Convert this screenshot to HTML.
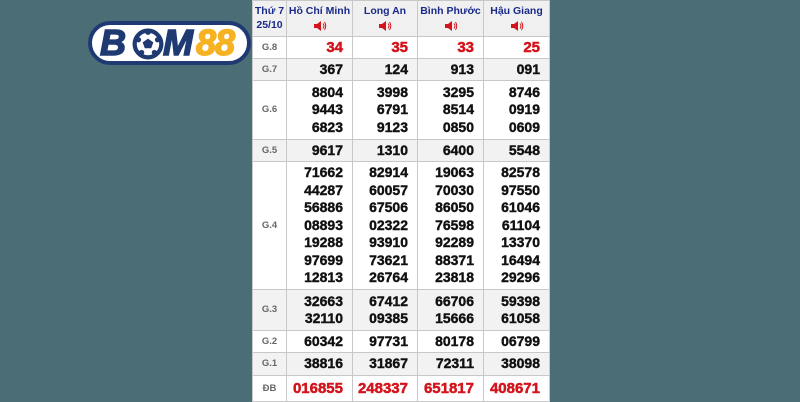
<!DOCTYPE html>
<html><head><meta charset="utf-8"><style>
*{margin:0;padding:0;box-sizing:border-box}
body{width:800px;height:400px;background:#4b6d75;position:relative;overflow:hidden;font-family:"Liberation Sans",Arial,sans-serif}
.logo{position:absolute;left:88px;top:21px;width:163px;height:44px;border:4px solid #1f3a72;border-radius:22px;background:#fff;overflow:hidden}
.logo span{position:absolute;top:0px;font:italic 700 36px/36px "Liberation Sans",sans-serif;letter-spacing:-1px;-webkit-text-stroke:1.5px currentColor}
table{position:absolute;left:252px;top:0;width:297px;border-collapse:collapse;background:#fff;table-layout:fixed}
td{border:1px solid #c8c8c8;text-align:right;padding-right:9px;font-weight:bold;font-size:14px;color:#111;line-height:17.5px;vertical-align:middle;-webkit-text-stroke:0.4px #111}
td.l{text-align:center;padding:0;color:#666;font-size:9.5px;-webkit-text-stroke:0}
tr.g td{background:#f2f2f2}
th{border:1px solid #c8c8c8;background:#f0f0f0;color:#1a2a8a;font-size:10.5px;font-weight:bold;height:36px;line-height:14px;vertical-align:top;padding-top:3px;white-space:nowrap;overflow:hidden}
td.r{color:#d4141c;font-size:15px;-webkit-text-stroke:0.5px #d4141c}
.sp{display:inline-block;width:14px;height:12px;position:relative;margin-top:2px}
</style></head><body>
<div class="logo">
<span style="left:8px;color:#1f3a72">B</span>
<svg style="position:absolute;left:40px;top:3px" width="32" height="32" viewBox="0 0 30 30"><circle cx="15" cy="15" r="12.5" fill="#fff" stroke="#1f3a72" stroke-width="4"/><polygon points="15,10 20,13.5 18,19 12,19 10,13.5" fill="#1f3a72"/><circle cx="6" cy="11" r="2.5" fill="#1f3a72"/><circle cx="24" cy="11" r="2.5" fill="#1f3a72"/><circle cx="9" cy="23" r="2.5" fill="#1f3a72"/><circle cx="21" cy="23" r="2.5" fill="#1f3a72"/><circle cx="15" cy="4" r="2.5" fill="#1f3a72"/></svg>
<span style="left:71px;color:#1f3a72">M</span>
<span style="left:104px;color:#f6b221">88</span>
</div>
<table>
<colgroup><col style="width:34px"><col style="width:66px"><col style="width:65px"><col style="width:66px"><col style="width:66px"></colgroup>
<tr><th>Thứ 7<br>25/10</th>
<th>Hồ Chí Minh<br><svg class="sp" viewBox="0 0 14 12"><polygon points="1,4 4,4 8,1 8,11 4,8 1,8" fill="#d4141c"/><path d="M10 3.5Q12 6 10 8.5M11.5 2Q14 6 11.5 10" stroke="#d4141c" fill="none"/></svg></th>
<th>Long An<br><svg class="sp" viewBox="0 0 14 12"><polygon points="1,4 4,4 8,1 8,11 4,8 1,8" fill="#d4141c"/><path d="M10 3.5Q12 6 10 8.5M11.5 2Q14 6 11.5 10" stroke="#d4141c" fill="none"/></svg></th>
<th>Bình Phước<br><svg class="sp" viewBox="0 0 14 12"><polygon points="1,4 4,4 8,1 8,11 4,8 1,8" fill="#d4141c"/><path d="M10 3.5Q12 6 10 8.5M11.5 2Q14 6 11.5 10" stroke="#d4141c" fill="none"/></svg></th>
<th>Hậu Giang<br><svg class="sp" viewBox="0 0 14 12"><polygon points="1,4 4,4 8,1 8,11 4,8 1,8" fill="#d4141c"/><path d="M10 3.5Q12 6 10 8.5M11.5 2Q14 6 11.5 10" stroke="#d4141c" fill="none"/></svg></th></tr>
<tr style="height:22px"><td class="l">G.8</td><td class="r">34</td><td class="r">35</td><td class="r">33</td><td class="r">25</td></tr>
<tr class="g" style="height:22px"><td class="l">G.7</td><td>367</td><td>124</td><td>913</td><td>091</td></tr>
<tr style="height:59px"><td class="l">G.6</td><td>8804<br>9443<br>6823</td><td>3998<br>6791<br>9123</td><td>3295<br>8514<br>0850</td><td>8746<br>0919<br>0609</td></tr>
<tr class="g" style="height:22px"><td class="l">G.5</td><td>9617</td><td>1310</td><td>6400</td><td>5548</td></tr>
<tr style="height:128px"><td class="l">G.4</td><td>71662<br>44287<br>56886<br>08893<br>19288<br>97699<br>12813</td><td>82914<br>60057<br>67506<br>02322<br>93910<br>73621<br>26764</td><td>19063<br>70030<br>86050<br>76598<br>92289<br>88371<br>23818</td><td>82578<br>97550<br>61046<br>61104<br>13370<br>16494<br>29296</td></tr>
<tr class="g" style="height:41px"><td class="l">G.3</td><td>32663<br>32110</td><td>67412<br>09385</td><td>66706<br>15666</td><td>59398<br>61058</td></tr>
<tr style="height:22px"><td class="l">G.2</td><td>60342</td><td>97731</td><td>80178</td><td>06799</td></tr>
<tr class="g" style="height:23px"><td class="l">G.1</td><td>38816</td><td>31867</td><td>72311</td><td>38098</td></tr>
<tr style="height:26px"><td class="l">ĐB</td><td class="r">016855</td><td class="r">248337</td><td class="r">651817</td><td class="r">408671</td></tr>
</table>
</body></html>
